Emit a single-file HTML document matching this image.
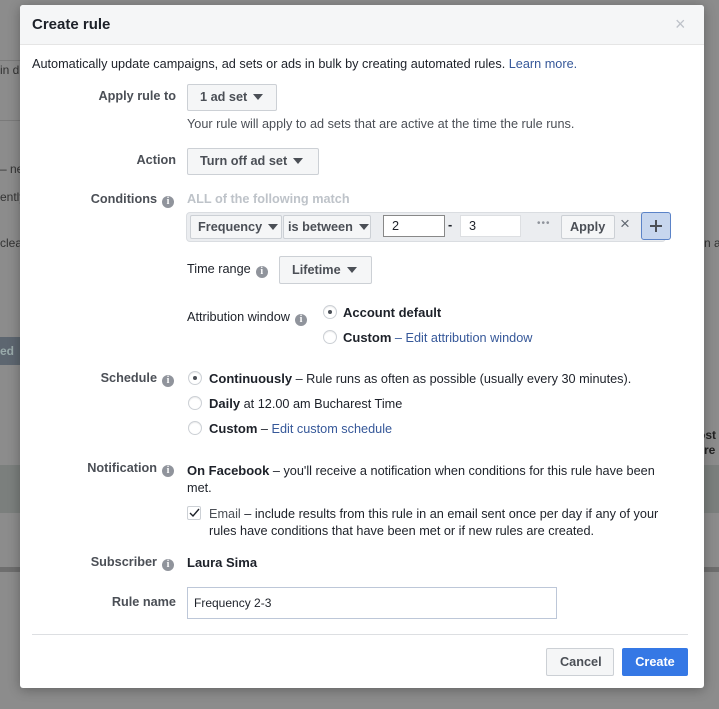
<!DOCTYPE html>
<html><head><meta charset="utf-8"><style>
*{box-sizing:border-box;margin:0;padding:0}
body{width:719px;height:709px;background:#8c8c8c;font-family:"Liberation Sans",Arial,sans-serif;font-size:12.7px;color:#1d2129;position:relative;overflow:hidden}
.a{position:absolute;white-space:nowrap}
.m{position:absolute;left:20px;top:5px;width:684px;height:683px;background:#fff;border-radius:3px;box-shadow:0 2px 12px rgba(0,0,0,.3);overflow:hidden}
.lbl{position:absolute;white-space:nowrap;font-weight:bold;color:#4b4f56;text-align:right;right:528px}
.btn{position:absolute;background:#f5f6f7;border:1px solid #ccd0d5;border-radius:2px;font-weight:bold;color:#4b4f56;padding-left:12px;line-height:25px;white-space:nowrap}
.car{display:inline-block;width:0;height:0;border-left:5px solid transparent;border-right:5px solid transparent;border-top:6px solid #4b4f56;margin-left:6px;vertical-align:1px}
.i{display:inline-block;width:12px;height:12px;border-radius:50%;background:#90949c;color:#fff;font-size:10px;font-weight:bold;text-align:center;line-height:12px;font-family:"Liberation Serif",serif;vertical-align:-1px;margin-left:5px}
.r{position:absolute;width:14px;height:14px;border-radius:50%;border:1px solid #ccd0d5;background:#fff;box-shadow:inset 0 1px 1px rgba(0,0,0,.08)}
.r.on::after{content:"";position:absolute;left:4px;top:4px;width:4px;height:4px;border-radius:50%;background:#4b4f56}
.lnk{color:#365899}
.inp{position:absolute;background:#fff;border:1px solid #bdc7d8;padding-left:8px;white-space:nowrap}
</style></head><body>
<div class="a" style="left:0;top:60px;width:20px;height:1px;background:#7a7a7a"></div>
<div class="a" style="left:0;top:63px;color:#333;font-size:12px">in d</div>
<div class="a" style="left:0;top:120px;width:20px;height:1px;background:#7a7a7a"></div>
<div class="a" style="left:0;top:162px;color:#333;font-size:12px">– ne</div>
<div class="a" style="left:0;top:190px;color:#333;font-size:12px">ently</div>
<div class="a" style="left:0;top:236px;color:#333;font-size:12px">clea</div>
<div class="a" style="left:0;top:337px;width:20px;height:28px;background:#5d6670"></div>
<div class="a" style="left:0;top:344px;color:#9aa;font-weight:bold;font-size:12px">ed</div>
<div class="a" style="left:0;top:465px;width:20px;height:48px;background:#7b7f7d"></div>
<div class="a" style="left:704px;top:465px;width:15px;height:48px;background:#7b7f7d"></div>
<div class="a" style="left:0;top:567px;width:719px;height:5px;background:#6e6e6e"></div>
<div class="a" style="left:704px;top:236px;color:#333;font-size:12px">n as</div>
<div class="a" style="left:698px;top:428px;color:#222;font-weight:bold;font-size:12px">ost</div>
<div class="a" style="left:704px;top:443px;color:#222;font-weight:bold;font-size:12px">re</div>

<div class="m">
<div class="a" style="left:0;top:0;width:684px;height:40px;background:#f5f6f7;border-bottom:1px solid #e5e5e5"></div>
<div class="a" style="left:12px;top:11px;font-size:15px;font-weight:bold;color:#1d2129">Create rule</div>
<div class="a" style="left:655px;top:9px;font-size:18px;color:#bec2c9">×</div>
<div class="a" style="left:12px;top:52px">Automatically update campaigns, ad sets or ads in bulk by creating automated rules. <span class="lnk">Learn more.</span></div>

<div class="lbl" style="top:84px">Apply rule to</div>
<div class="btn" style="left:167px;top:79px;width:90px;height:27px">1 ad set<span class="car"></span></div>
<div class="a" style="left:167px;top:112px;color:#4b4f56">Your rule will apply to ad sets that are active at the time the rule runs.</div>

<div class="lbl" style="top:148px">Action</div>
<div class="btn" style="left:167px;top:143px;width:132px;height:27px">Turn off ad set<span class="car"></span></div>

<div class="lbl" style="top:187px;right:530px">Conditions<span class="i">i</span></div>
<div class="a" style="left:167px;top:187px;color:#bec3c9;font-weight:bold">ALL of the following match</div>
<div class="a" style="left:166px;top:207px;width:480px;height:30px;background:#ebedf0;border:1px solid #dadde1;border-radius:4px"></div>
<div class="btn" style="left:170px;top:210px;width:92px;height:24px;line-height:22px;padding-left:7px;background:#f5f6f7">Frequency<span class="car"></span></div>
<div class="btn" style="left:263px;top:210px;width:88px;height:24px;line-height:22px;padding-left:4px">is between<span class="car"></span></div>
<div class="inp" style="left:363px;top:210px;width:62px;height:22px;line-height:20px;border-color:#888">2</div>
<div class="a" style="left:428px;top:213px;font-weight:bold">-</div>
<div class="inp" style="left:440px;top:210px;width:61px;height:22px;line-height:20px;border-color:#dddfe2">3</div>
<div class="a" style="left:517px;top:213px;color:#90949c;font-size:10px;letter-spacing:1px">•••</div>
<div class="btn" style="left:541px;top:210px;width:54px;height:24px;line-height:22px;padding-left:8px">Apply</div>
<div class="a" style="left:600px;top:209px;font-size:17px;color:#606770">×</div>
<div class="a" style="left:621px;top:207px;width:30px;height:28px;background:#c7d6ee;border:1px solid #5b83c8;border-radius:3px"></div>
<div class="a" style="left:630px;top:220px;width:12px;height:2px;background:#4b4f56"></div>
<div class="a" style="left:635px;top:215px;width:2px;height:12px;background:#4b4f56"></div>

<div class="a" style="left:167px;top:257px">Time range<span class="i">i</span></div>
<div class="btn" style="left:259px;top:251px;width:93px;height:28px;line-height:26px">Lifetime<span class="car"></span></div>

<div class="a" style="left:167px;top:305px">Attribution window<span class="i">i</span></div>
<div class="r on" style="left:303px;top:300px"></div>
<div class="a" style="left:323px;top:300px;font-weight:bold;font-size:13px">Account default</div>
<div class="r" style="left:303px;top:325px"></div>
<div class="a" style="left:323px;top:325px"><b style="font-size:13px">Custom</b> <span class="lnk">– Edit attribution window</span></div>

<div class="lbl" style="top:366px;right:530px">Schedule<span class="i">i</span></div>
<div class="r on" style="left:168px;top:366px"></div>
<div class="a" style="left:189px;top:366px"><b style="font-size:13px">Continuously</b> – Rule runs as often as possible (usually every 30 minutes).</div>
<div class="r" style="left:168px;top:391px"></div>
<div class="a" style="left:189px;top:391px"><b style="font-size:13px">Daily</b> at 12.00 am Bucharest Time</div>
<div class="r" style="left:168px;top:416px"></div>
<div class="a" style="left:189px;top:416px"><b style="font-size:13px">Custom</b> – <span class="lnk">Edit custom schedule</span></div>

<div class="lbl" style="top:456px;right:530px">Notification<span class="i">i</span></div>
<div class="a" style="left:167px;top:457px;line-height:17px"><b style="font-size:13px">On Facebook</b> – you'll receive a notification when conditions for this rule have been<br>met.</div>
<div class="a" style="left:167px;top:501px;width:14px;height:14px;border:1px solid #ccd0d5;border-radius:2px;background:#fff"></div>
<svg class="a" style="left:169px;top:503px" width="11" height="10"><path d="M1 5 L4 8 L10 1" stroke="#1d2129" stroke-width="1.4" fill="none"/></svg>
<div class="a" style="left:189px;top:501px;line-height:17px"><span style="color:#4b4f56">Email</span> – include results from this rule in an email sent once per day if any of your<br>rules have conditions that have been met or if new rules are created.</div>

<div class="lbl" style="top:550px;right:530px">Subscriber<span class="i">i</span></div>
<div class="a" style="left:167px;top:550px;font-weight:bold;font-size:13px">Laura Sima</div>

<div class="lbl" style="top:590px">Rule name</div>
<div class="inp" style="left:167px;top:582px;width:370px;height:32px;line-height:30px;padding-left:6px;font-size:12px">Frequency 2-3</div>

<div class="a" style="left:12px;top:629px;width:656px;height:1px;background:#dddfe2"></div>
<div class="btn" style="left:526px;top:643px;width:68px;height:28px;line-height:26px;padding-left:13px">Cancel</div>
<div class="a" style="left:602px;top:643px;width:66px;height:28px;border-radius:2px;color:#fff;font-weight:bold;text-align:center;line-height:28px;background:#3578e5">Create</div>
</div>
</body></html>
